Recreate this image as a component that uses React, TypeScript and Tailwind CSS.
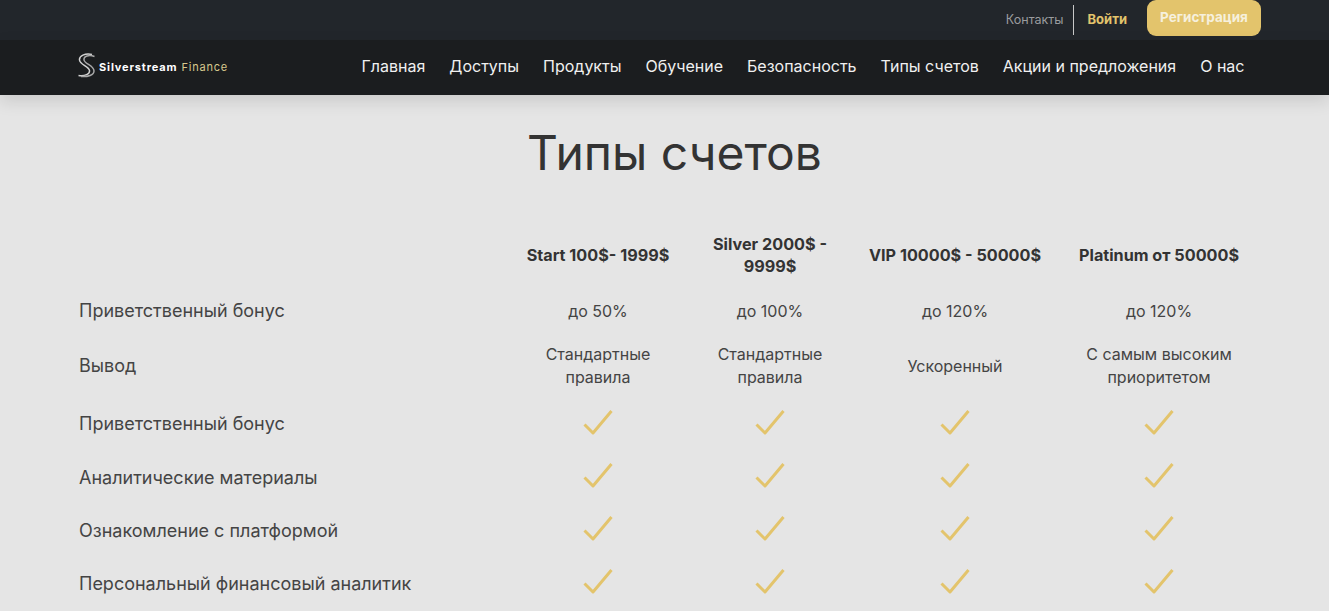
const navItems = ['Главная', 'Доступы', 'Продукты', 'Обучение', 'Безопасность', 'Типы счетов', 'Акции и предложения', 'О нас'];

const rows = [
  { label: 'Приветственный бонус', values: ['до 50%', 'до 100%', 'до 120%', 'до 120%'], h: 'h-[52px]' },
  { label: 'Вывод', values: ['Стандартные правила', 'Стандартные правила', 'Ускоренный', 'С самым высоким приоритетом'], h: 'h-[58px]' },
  { label: 'Приветственный бонус', h: 'h-[56px] pt-[2px]' },
  { label: 'Аналитические материалы', h: 'h-[53px]' },
  { label: 'Ознакомление с платформой', h: 'h-[53px]' },
  { label: 'Персональный финансовый аналитик', h: 'h-[53px]' },
];

const plans = ['Start 100$- 1999$', 'Silver 2000$ - 9999$', 'VIP 10000$ - 50000$', 'Platinum от 50000$'];

const Check = () => (
  <svg width="30" height="28" viewBox="0 0 30 28" fill="none" className="-mt-[3px]">
    <path d="M1.500 15.500 L10 24 L28.500 2" stroke="#e3c46c" strokeWidth="3" strokeLinejoin="round" />
  </svg>
);

const Logo = () => (
  <div className="flex items-center">
    <svg width="19" height="25" viewBox="0 0 19 25" fill="none">
      <path d="M15 1.500 C8 0 2 3 2.500 7 C3 12 12 13 12.500 17.500 C13 21 8 23.500 1.500 22.500" stroke="#d2d2d2" strokeWidth="1.5" />
      <path d="M17.500 3.500 C12 1.500 6.500 3 7 7 C7.500 11 17 12.500 17 18 C17 22 11 24 4 23.500" stroke="#a8a8a8" strokeWidth="1.5" />
    </svg>
    <span className="ml-[3px] mt-[3px] text-[11px] font-bold tracking-[0.85px] text-white">Silverstream</span>
    <span className="ml-[4px] mt-[3px] text-[11px] font-normal tracking-[0.8px] text-[#d8c98e]">Finance</span>
  </div>
);

export default function App() {
  return (
    <div className="h-[611px] overflow-hidden bg-[#e5e5e5] font-['Inter',sans-serif] text-[#333333]">
      <div className="flex h-10 items-center justify-end bg-[#22262b] pr-[68px]">
        <span className="text-[12.5px] text-[#9a9c9e]">Контакты</span>
        <span className="ml-[9px] h-[30px] w-px bg-[#c8c8c8]"></span>
        <span className="ml-[14px] text-[13px] font-bold text-[#e3c46c]">Войти</span>
        <div className="ml-5 -mt-[5px] flex h-[36px] w-[114px] items-center justify-center rounded-[9px] bg-[#e3c46c] text-[13.5px] font-bold text-[#f6f0dd]">Регистрация</div>
      </div>
      <div className="relative flex h-[55px] items-center justify-between bg-[#1b1d1f] pb-1 pl-[77px] pr-[84.5px] shadow-[0_6px_16px_rgba(0,0,0,0.12)]">
        <Logo />
        <nav className="flex gap-6 text-base text-[#f0f0f0]">
          {navItems.map((item) => (
            <span key={item}>{item}</span>
          ))}
        </nav>
      </div>
      <h1 className="mt-[26px] pl-[20px] text-center text-[48px] leading-[64px] font-normal text-[#333333]">Типы счетов</h1>
      <div className="ml-[79px] mt-[40px] grid grid-cols-[434px_170px_174px_196px_212px]">
        <div className="h-[60px]"></div>
        {plans.map((plan) => (
          <div key={plan} className="flex h-[60px] items-center justify-center px-2 text-center text-[16.2px] leading-[22px] font-bold">{plan}</div>
        ))}
        {rows.map((row, idx) => (
          <div key={idx} className="contents">
            <div className={`flex items-center text-lg text-[#444444] ${row.h}`}>{row.label}</div>
            {[0, 1, 2, 3].map((i) => (
              <div key={i} className={`flex items-center justify-center px-6 text-center text-base leading-[23px] text-[#444444] ${row.h}`}>
                {row.values ? row.values[i] : <Check />}
              </div>
            ))}
          </div>
        ))}
      </div>
    </div>
  );
}
